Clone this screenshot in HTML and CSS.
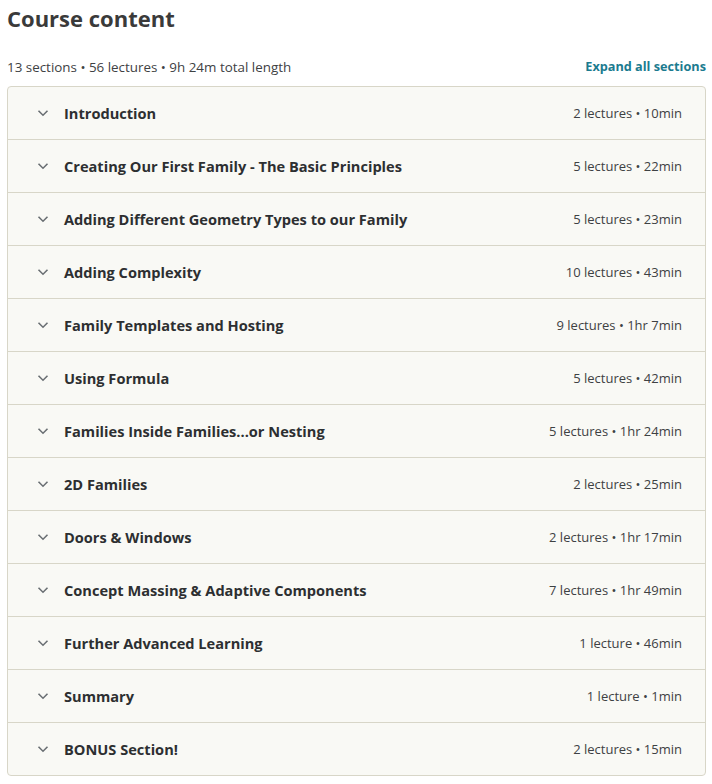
FILE: index.html
```html
<!DOCTYPE html>
<html>
<head>
<meta charset="utf-8">
<link rel="stylesheet" href="styles.css">
</head>
<body>
<div class="page">
  <h2 class="title">Course content</h2>
  <div class="meta">
    <span class="summary">13 sections • 56 lectures • 9h 24m total length</span>
    <button class="expand">Expand all sections</button>
  </div>
  <div class="sections">
    <div class="row"><span class="chev"><svg width="12" height="8" viewBox="0 0 12 8"><path d="M1.5 1.8 L6 6.2 L10.5 1.8" fill="none" stroke="#6a6f73" stroke-width="1.6"/></svg></span><span class="name">Introduction</span><span class="info">2 lectures • 10min</span></div>
    <div class="row"><span class="chev"><svg width="12" height="8" viewBox="0 0 12 8"><path d="M1.5 1.8 L6 6.2 L10.5 1.8" fill="none" stroke="#6a6f73" stroke-width="1.6"/></svg></span><span class="name">Creating Our First Family - The Basic Principles</span><span class="info">5 lectures • 22min</span></div>
    <div class="row"><span class="chev"><svg width="12" height="8" viewBox="0 0 12 8"><path d="M1.5 1.8 L6 6.2 L10.5 1.8" fill="none" stroke="#6a6f73" stroke-width="1.6"/></svg></span><span class="name">Adding Different Geometry Types to our Family</span><span class="info">5 lectures • 23min</span></div>
    <div class="row"><span class="chev"><svg width="12" height="8" viewBox="0 0 12 8"><path d="M1.5 1.8 L6 6.2 L10.5 1.8" fill="none" stroke="#6a6f73" stroke-width="1.6"/></svg></span><span class="name">Adding Complexity</span><span class="info">10 lectures • 43min</span></div>
    <div class="row"><span class="chev"><svg width="12" height="8" viewBox="0 0 12 8"><path d="M1.5 1.8 L6 6.2 L10.5 1.8" fill="none" stroke="#6a6f73" stroke-width="1.6"/></svg></span><span class="name">Family Templates and Hosting</span><span class="info">9 lectures • 1hr 7min</span></div>
    <div class="row"><span class="chev"><svg width="12" height="8" viewBox="0 0 12 8"><path d="M1.5 1.8 L6 6.2 L10.5 1.8" fill="none" stroke="#6a6f73" stroke-width="1.6"/></svg></span><span class="name">Using Formula</span><span class="info">5 lectures • 42min</span></div>
    <div class="row"><span class="chev"><svg width="12" height="8" viewBox="0 0 12 8"><path d="M1.5 1.8 L6 6.2 L10.5 1.8" fill="none" stroke="#6a6f73" stroke-width="1.6"/></svg></span><span class="name">Families Inside Families...or Nesting</span><span class="info">5 lectures • 1hr 24min</span></div>
    <div class="row"><span class="chev"><svg width="12" height="8" viewBox="0 0 12 8"><path d="M1.5 1.8 L6 6.2 L10.5 1.8" fill="none" stroke="#6a6f73" stroke-width="1.6"/></svg></span><span class="name">2D Families</span><span class="info">2 lectures • 25min</span></div>
    <div class="row"><span class="chev"><svg width="12" height="8" viewBox="0 0 12 8"><path d="M1.5 1.8 L6 6.2 L10.5 1.8" fill="none" stroke="#6a6f73" stroke-width="1.6"/></svg></span><span class="name">Doors &amp; Windows</span><span class="info">2 lectures • 1hr 17min</span></div>
    <div class="row"><span class="chev"><svg width="12" height="8" viewBox="0 0 12 8"><path d="M1.5 1.8 L6 6.2 L10.5 1.8" fill="none" stroke="#6a6f73" stroke-width="1.6"/></svg></span><span class="name">Concept Massing &amp; Adaptive Components</span><span class="info">7 lectures • 1hr 49min</span></div>
    <div class="row"><span class="chev"><svg width="12" height="8" viewBox="0 0 12 8"><path d="M1.5 1.8 L6 6.2 L10.5 1.8" fill="none" stroke="#6a6f73" stroke-width="1.6"/></svg></span><span class="name">Further Advanced Learning</span><span class="info">1 lecture • 46min</span></div>
    <div class="row"><span class="chev"><svg width="12" height="8" viewBox="0 0 12 8"><path d="M1.5 1.8 L6 6.2 L10.5 1.8" fill="none" stroke="#6a6f73" stroke-width="1.6"/></svg></span><span class="name">Summary</span><span class="info">1 lecture • 1min</span></div>
    <div class="row"><span class="chev"><svg width="12" height="8" viewBox="0 0 12 8"><path d="M1.5 1.8 L6 6.2 L10.5 1.8" fill="none" stroke="#6a6f73" stroke-width="1.6"/></svg></span><span class="name">BONUS Section!</span><span class="info">2 lectures • 15min</span></div>
  </div>
</div>
</body>
</html>
```

FILE: styles.css
```css
* { box-sizing: border-box; }
body {
  margin: 0;
  background: #ffffff;
  font-family: "Open Sans", "Noto Sans", sans-serif;
  color: #2d2f31;
}
.page {
  padding: 0 6px 0 7px;
}
.title {
  margin: 0;
  padding-top: 2px;
  font-size: 22px;
  line-height: 32px;
  font-weight: 700;
  color: #3a3a3a;
}
.meta {
  display: flex;
  justify-content: space-between;
  align-items: center;
  margin-top: 20px;
  height: 26px;
  margin-bottom: 6px;
}
.summary {
  font-size: 13.4px;
  color: #3e4143;
}
.expand {
  border: none;
  background: none;
  padding: 0;
  font-family: inherit;
  font-size: 12.7px;
  font-weight: 700;
  color: #1b7b8f;
  margin-top: -2px;
}
.sections {
  border: 1px solid #d8d6c8;
  border-radius: 4px;
  background: #f9f9f5;
  overflow: hidden;
}
.row {
  display: flex;
  align-items: center;
  height: 53px;
  border-top: 1px solid #d8d6c8;
  padding: 0 23px 0 29px;
}
.row:first-child {
  border-top: none;
  height: 52px;
}
.chev {
  width: 12px;
  height: 8px;
  display: flex;
  margin-right: 15px;
}
.name {
  flex: 1;
  font-size: 14.6px;
  font-weight: 700;
  color: #2d2f31;
}
.info {
  font-size: 13px;
  color: #3e4143;
}
```
